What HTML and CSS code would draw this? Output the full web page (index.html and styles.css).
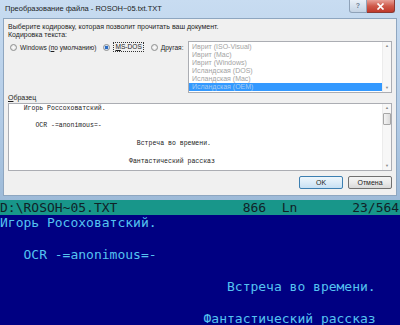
FILE: index.html
```html
<!DOCTYPE html>
<html>
<head>
  <meta charset="utf-8">
  <title>Преобразование файла</title>
  <link rel="stylesheet" href="styles.css">
</head>
<body>
<div class="dialog">
  <div class="titlebar">
    <span class="title">Преобразование файла - ROSOH~05.txt.TXT</span>
    <span class="btnHelp">?</span>
    <span class="btnClose">
      <svg width="9" height="7" viewBox="0 0 9 7"><path d="M1.5 0.5 L7.5 6.5 M7.5 0.5 L1.5 6.5" stroke="#fff" stroke-width="1.7"/></svg>
    </span>
  </div>
  <div class="client">
    <p class="prompt">Выберите кодировку, которая позволит прочитать ваш документ.</p>
    <div class="encoding">
      <div class="encodingLeft">
        <p class="label">Кодировка текста:</p>
        <div class="radios">
          <span class="radio"><span class="dot"></span><span>Windows (<u>п</u>о умолчанию)</span></span>
          <span class="radio checked"><span class="dot"></span><span class="focus"><u>M</u>S-DOS</span></span>
          <span class="radio"><span class="dot"></span><span><u>Д</u>ругая:</span></span>
        </div>
      </div>
      <div class="listbox">
        <ul>
          <li>Иврит (ISO-Visual)</li>
          <li>Иврит (Mac)</li>
          <li>Иврит (Windows)</li>
          <li>Исландская (DOS)</li>
          <li>Исландская (Mac)</li>
          <li class="selected">Исландская (OEM)</li>
        </ul>
        <div class="vscroll">
          <span class="arrow">▲</span>
          <span class="track"></span>
          <span class="arrow">▼</span>
        </div>
      </div>
    </div>
    <p class="label sampleLabel"><u>О</u>бразец</p>
    <div class="sample">
<pre>   Игорь Россоховатский.

      OCR -=anonimous=-

                                Встреча во времени.

                              Фантастический рассказ</pre>
      <div class="vscroll">
        <span class="arrow">▲</span>
        <span class="thumb"></span>
        <span class="track"></span>
        <span class="arrow">▼</span>
      </div>
    </div>
    <div class="buttons">
      <span class="button default">OK</span>
      <span class="button">Отмена</span>
    </div>
  </div>
</div>
<div class="console">
  <div class="status">D:\ROSOH~05.TXT                866  Ln       23/564</div>
<pre class="screen">Игорь Росоховатский.

   OCR -=anonimous=-

                             Встреча во времени.

                          Фантастический рассказ</pre>
</div>
</body>
</html>
```

FILE: styles.css
```css
* {
  box-sizing: border-box;
}

body {
  margin: 0;
  width: 400px;
  height: 325px;
  overflow: hidden;
  background-color: #000082;
  font-family: "Liberation Sans", "DejaVu Sans", sans-serif;
}

p {
  margin: 0;
}

/* окно диалога */
.dialog {
  height: 200px;
  padding: 0 3px 4px;
  background: linear-gradient(#c8dcf1, #b2cbe6 60%, #9dbad8);
}

.titlebar {
  display: flex;
  align-items: flex-start;
  height: 18px;
}

.title {
  flex: 1;
  padding-left: 2px;
  font-size: 7.5px;
  line-height: 18px;
  color: #1b1b1b;
}

.btnHelp {
  width: 18px;
  height: 13px;
  border: 1px solid #8fa2b8;
  border-top: 0;
  border-radius: 0 0 0 3px;
  background: linear-gradient(#e9f0f8, #c4d3e4);
  color: #6d7f95;
  font-size: 7px;
  font-weight: bold;
  line-height: 12px;
  text-align: center;
}

.btnClose {
  display: flex;
  align-items: center;
  justify-content: center;
  width: 28px;
  height: 13px;
  margin-right: 2px;
  border: 1px solid #8c3a33;
  border-top: 0;
  border-left: 0;
  border-radius: 0 0 3px 0;
  background: linear-gradient(#e8a198, #cf5a4b 50%, #c0392b);
}

.client {
  height: 178px;
  padding: 3px 4px 0;
  border: 1px solid #8ea6c0;
  background-color: #f0f0f0;
  font-size: 7px;
  color: #1e1e1e;
}

.prompt {
  line-height: 9px;
}

.label {
  line-height: 8px;
}

.encoding {
  display: flex;
}

.encodingLeft {
  flex: 1;
  min-width: 0;
}

.radios {
  display: flex;
  align-items: center;
  height: 10px;
  margin-top: 3px;
  white-space: nowrap;
  font-size: 6.6px;
}

.radio {
  display: flex;
  align-items: center;
  gap: 3px;
  margin-left: 2px;
}

.radio + .radio {
  margin-left: 7px;
}

.dot {
  flex: none;
  width: 7px;
  height: 7px;
  border: 1px solid #8e8f8f;
  border-radius: 50%;
  background: radial-gradient(circle, #fdfdfd, #dcdcdc);
}

.checked .dot {
  background: radial-gradient(circle, #2c6cc4 0 1.6px, #cfe0f3 2px, #f4f8fc);
}

.focus {
  padding: 0 1px;
  border: 1px dotted #333;
  line-height: 8px;
}

/* список кодировок */
.listbox {
  display: flex;
  flex: none;
  width: 204px;
  height: 52px;
  margin-top: 10px;
  border: 1px solid #abadb3;
  background-color: #fff;
}

.listbox ul {
  flex: 1;
  margin: 0;
  padding: 1px 0;
  list-style-type: none;
}

.listbox li {
  height: 8px;
  padding-left: 3px;
  line-height: 8px;
  color: #a3a3a3;
}

.listbox li.selected {
  background-color: #3399ff;
  color: #a9cdf3;
}

.vscroll {
  display: flex;
  flex-direction: column;
  width: 9px;
  border-left: 1px solid #ececec;
  background-color: #f7f7f7;
}

.arrow {
  height: 8px;
  font-size: 4px;
  line-height: 8px;
  text-align: center;
  color: #8a8a8a;
}

.track {
  flex: 1;
}

.thumb {
  height: 12px;
  margin: 1px 0 0;
  border: 1px solid #a7a7a7;
  border-radius: 1px;
  background: linear-gradient(90deg, #f3f3f3, #dcdcdc);
}

.sampleLabel {
  margin-top: 1px;
}

/* образец текста */
.sample {
  display: flex;
  height: 68px;
  margin-top: 1px;
  border: 1px solid #abadb3;
  background-color: #fff;
}

.sample pre {
  flex: 1;
  margin: 0;
  padding: 0.5px 0 0 3px;
  overflow: hidden;
  font-family: "Liberation Mono", monospace;
  font-size: 6.5px;
  line-height: 8.9px;
  color: #222;
}

.buttons {
  display: flex;
  justify-content: flex-end;
  gap: 5px;
  margin-top: 5px;
}

.button {
  width: 44px;
  height: 13px;
  border: 1px solid #707070;
  border-radius: 2px;
  background: linear-gradient(#f4f4f4, #ebebeb 50%, #d9d9d9);
  font-size: 7px;
  line-height: 11px;
  text-align: center;
  color: #1e1e1e;
}

.button.default {
  border-color: #3c7fb1;
  background: linear-gradient(#eef6fb, #dcecf8 50%, #c7e0f3);
}

/* консоль */
.console {
  font-family: "DejaVu Sans Mono", monospace;
  font-size: 13px;
}

.status {
  height: 15px;
  background-color: #18968a;
  color: #102228;
  line-height: 15px;
  white-space: pre;
}

.screen {
  margin: 0;
  font-family: inherit;
  font-size: 13px;
  line-height: 16px;
  color: #55c3f0;
}
```
